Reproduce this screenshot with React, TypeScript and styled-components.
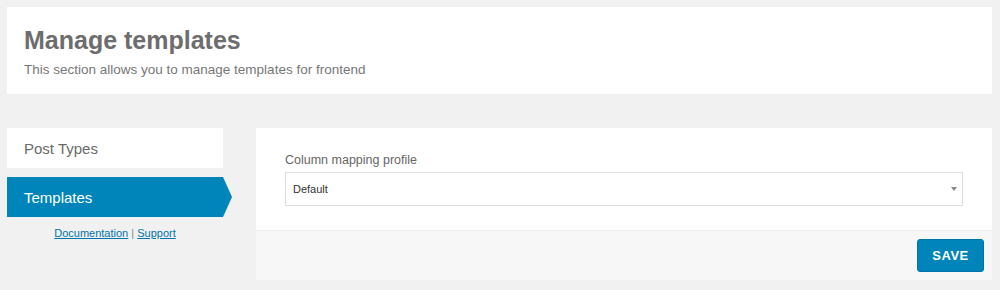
import React from "react";
import styled, { createGlobalStyle } from "styled-components";

const GlobalStyle = createGlobalStyle`
  body {
    margin: 0;
    background: #f1f1f1;
    font-family: "Liberation Sans", Arial, sans-serif;
  }
`;

export default function App() {
  return (
    <>
      <GlobalStyle />
      <Page>
        <Header>
          <Title>Manage templates</Title>
          <Subtitle>This section allows you to manage templates for frontend</Subtitle>
        </Header>
        <Body>
          <Sidebar>
            <Tab>Post Types</Tab>
            <Tab active>Templates</Tab>
            <Links>
              <a href="#">Documentation</a> | <a href="#">Support</a>
            </Links>
          </Sidebar>
          <Panel>
            <PanelContent>
              <Label>Column mapping profile</Label>
              <Select>
                <span>Default</span>
                <Caret />
              </Select>
            </PanelContent>
            <Footer>
              <SaveButton>Save</SaveButton>
            </Footer>
          </Panel>
        </Body>
      </Page>
    </>
  );
}

const Page = styled.div`
  padding: 7px 8px 9px 7px;
  display: flex;
  flex-direction: column;
  gap: 34px;
`;

const Header = styled.div`
  background: #fff;
  height: 87px;
  box-sizing: border-box;
  padding: 19px 17px 0;
`;

const Title = styled.h1`
  margin: 0;
  font-size: 25px;
  line-height: 29px;
  font-weight: bold;
  color: #6d6d6d;
`;

const Subtitle = styled.p`
  margin: 7px 0 0;
  font-size: 13.5px;
  color: #777;
`;

const Body = styled.div`
  display: flex;
  gap: 33px;
  align-items: flex-start;
`;

const Sidebar = styled.div`
  width: 216px;
  flex-shrink: 0;
  display: flex;
  flex-direction: column;
  gap: 9px;
`;

const Tab = styled.div<{ active?: boolean }>`
  position: relative;
  height: 40px;
  display: flex;
  align-items: center;
  padding-left: 17px;
  font-size: 15px;
  background: ${({ active }) => (active ? "#0085ba" : "#fff")};
  color: ${({ active }) => (active ? "#fff" : "#6a6a6a")};

  &::after {
    content: "";
    display: ${({ active }) => (active ? "block" : "none")};
    position: absolute;
    right: -9px;
    top: 0;
    border-top: 20px solid transparent;
    border-bottom: 20px solid transparent;
    border-left: 9px solid #0085ba;
  }
`;

const Links = styled.div`
  text-align: center;
  font-size: 11px;
  color: #888;
  margin-top: 1px;

  a {
    color: #0073aa;
  }
`;

const Panel = styled.div`
  flex: 1;
  background: #fff;
`;

const PanelContent = styled.div`
  padding: 25px 29px 24px;
`;

const Label = styled.div`
  font-size: 12.5px;
  color: #666;
  margin-bottom: 5px;
`;

const Select = styled.div`
  height: 34px;
  box-sizing: border-box;
  border: 1px solid #ddd;
  display: flex;
  align-items: center;
  justify-content: space-between;
  padding: 0 5px 0 7px;
  font-size: 11px;
  color: #333;
`;

const Caret = styled.span`
  width: 0;
  height: 0;
  border-left: 3px solid transparent;
  border-right: 3px solid transparent;
  border-top: 4px solid #888;
`;

const Footer = styled.div`
  background: #f7f7f7;
  border-top: 1px solid #eee;
  height: 50px;
  box-sizing: border-box;
  display: flex;
  justify-content: flex-end;
  align-items: center;
  padding: 0 8px;
`;

const SaveButton = styled.button`
  height: 33px;
  width: 67px;
  background: #0085ba;
  border: 1px solid #0073aa;
  border-radius: 3px;
  color: #fff;
  font-family: inherit;
  font-weight: bold;
  font-size: 13px;
  letter-spacing: 0.5px;
  text-transform: uppercase;
`;
